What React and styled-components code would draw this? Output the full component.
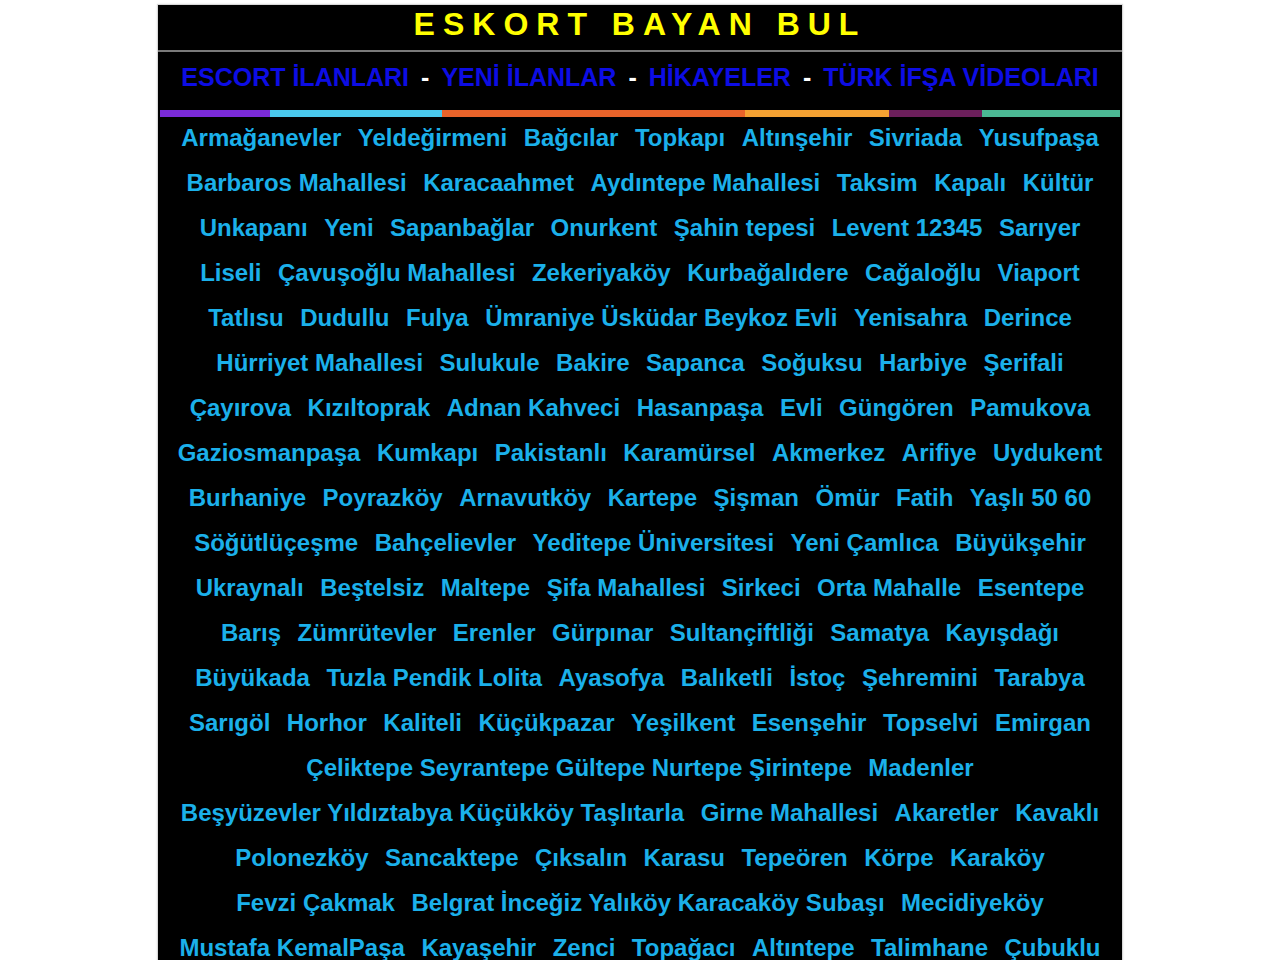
import styled, { createGlobalStyle } from 'styled-components';

const GlobalStyle = createGlobalStyle`
  body {
    margin: 0;
    background: #ffffff;
    font-family: "Liberation Sans", Arial, sans-serif;
  }
`;

const Page = styled.div`
  padding-top: 4px;
`;

const Container = styled.div`
  width: 964px;
  margin: 0 auto;
  background: #000;
  border: 1px solid #d8d8d8;
  box-shadow: 0 0 2px #e4e4e4;
`;

const Header = styled.h1`
  margin: 0;
  height: 45px;
  line-height: 38px;
  text-align: center;
  color: #ffff00;
  font-size: 32px;
  font-weight: bold;
  letter-spacing: 8px;
  border-bottom: 2px solid #7a7a7a;
`;

const Nav = styled.nav`
  display: flex;
  justify-content: center;
  align-items: center;
  gap: 12px;
  padding: 10px 0 18px;
  line-height: 30px;
  font-size: 25px;
  font-weight: bold;
`;

const NavLink = styled.a`
  color: #0d0de4;
  text-decoration: none;
  white-space: nowrap;
`;

const Dash = styled.span`
  color: #fff;
`;

const ColorBar = styled.div`
  display: flex;
  height: 7px;
  margin: 0 2px;
`;

const Segment = styled.div`
  width: ${(p) => p.$w}px;
  background: ${(p) => p.$c};
`;

const Links = styled.div`
  display: flex;
  flex-direction: column;
`;

const Row = styled.div`
  display: flex;
  justify-content: center;
  gap: 16.5px;
  height: 45px;
  line-height: 41px;
  font-size: 24px;
  font-weight: bold;
`;

const Place = styled.a`
  color: #1bb0ea;
  text-decoration: none;
  white-space: nowrap;
`;

const navItems = ['ESCORT İLANLARI', 'YENİ İLANLAR', 'HİKAYELER', 'TÜRK İFŞA VİDEOLARI'];

const segments = [
  { w: 110, c: '#7b2bd9' },
  { w: 172, c: '#4ac8ec' },
  { w: 303, c: '#e8632a' },
  { w: 144, c: '#f4a132' },
  { w: 93, c: '#6c1f5b' },
  { w: 138, c: '#4bb894' },
];

const rows = [
  ['Armağanevler', 'Yeldeğirmeni', 'Bağcılar', 'Topkapı', 'Altınşehir', 'Sivriada', 'Yusufpaşa'],
  ['Barbaros Mahallesi', 'Karacaahmet', 'Aydıntepe Mahallesi', 'Taksim', 'Kapalı', 'Kültür'],
  ['Unkapanı', 'Yeni', 'Sapanbağlar', 'Onurkent', 'Şahin tepesi', 'Levent 12345', 'Sarıyer'],
  ['Liseli', 'Çavuşoğlu Mahallesi', 'Zekeriyaköy', 'Kurbağalıdere', 'Cağaloğlu', 'Viaport'],
  ['Tatlısu', 'Dudullu', 'Fulya', 'Ümraniye Üsküdar Beykoz Evli', 'Yenisahra', 'Derince'],
  ['Hürriyet Mahallesi', 'Sulukule', 'Bakire', 'Sapanca', 'Soğuksu', 'Harbiye', 'Şerifali'],
  ['Çayırova', 'Kızıltoprak', 'Adnan Kahveci', 'Hasanpaşa', 'Evli', 'Güngören', 'Pamukova'],
  ['Gaziosmanpaşa', 'Kumkapı', 'Pakistanlı', 'Karamürsel', 'Akmerkez', 'Arifiye', 'Uydukent'],
  ['Burhaniye', 'Poyrazköy', 'Arnavutköy', 'Kartepe', 'Şişman', 'Ömür', 'Fatih', 'Yaşlı 50 60'],
  ['Söğütlüçeşme', 'Bahçelievler', 'Yeditepe Üniversitesi', 'Yeni Çamlıca', 'Büyükşehir'],
  ['Ukraynalı', 'Beştelsiz', 'Maltepe', 'Şifa Mahallesi', 'Sirkeci', 'Orta Mahalle', 'Esentepe'],
  ['Barış', 'Zümrütevler', 'Erenler', 'Gürpınar', 'Sultançiftliği', 'Samatya', 'Kayışdağı'],
  ['Büyükada', 'Tuzla Pendik Lolita', 'Ayasofya', 'Balıketli', 'İstoç', 'Şehremini', 'Tarabya'],
  ['Sarıgöl', 'Horhor', 'Kaliteli', 'Küçükpazar', 'Yeşilkent', 'Esenşehir', 'Topselvi', 'Emirgan'],
  ['Çeliktepe Seyrantepe Gültepe Nurtepe Şirintepe', 'Madenler'],
  ['Beşyüzevler Yıldıztabya Küçükköy Taşlıtarla', 'Girne Mahallesi', 'Akaretler', 'Kavaklı'],
  ['Polonezköy', 'Sancaktepe', 'Çıksalın', 'Karasu', 'Tepeören', 'Körpe', 'Karaköy'],
  ['Fevzi Çakmak', 'Belgrat İnceğiz Yalıköy Karacaköy Subaşı', 'Mecidiyeköy'],
  ['Mustafa KemalPaşa', 'Kayaşehir', 'Zenci', 'Topağacı', 'Altıntepe', 'Talimhane', 'Çubuklu'],
];

export default function App() {
  return (
    <Page>
      <GlobalStyle />
      <Container>
        <Header>ESKORT BAYAN BUL</Header>
        <Nav>
          {navItems.map((item, i) => [
            i > 0 && <Dash key={'d' + i}>-</Dash>,
            <NavLink key={item} href="#">
              {item}
            </NavLink>,
          ])}
        </Nav>
        <ColorBar>
          {segments.map((s, i) => (
            <Segment key={i} $w={s.w} $c={s.c} />
          ))}
        </ColorBar>
        <Links>
          {rows.map((row, i) => (
            <Row key={i}>
              {row.map((name) => (
                <Place key={name} href="#">
                  {name}
                </Place>
              ))}
            </Row>
          ))}
        </Links>
      </Container>
    </Page>
  );
}
